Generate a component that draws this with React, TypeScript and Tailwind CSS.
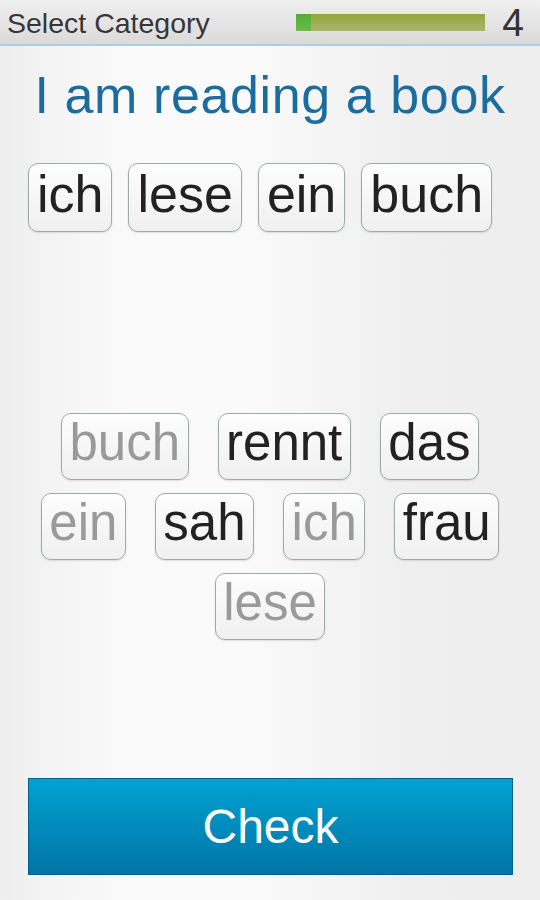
import React from "react";

const font = { fontFamily: '"Liberation Sans", Arial, sans-serif' };

function Tile({ w, used, small }: { w: string; used?: boolean; small?: boolean }) {
  return (
    <div
      className={`flex items-center justify-center rounded-[10px] border-[1.5px] border-[#9bada9] bg-gradient-to-b from-[#fdfdfd] to-[#f0f0f0] leading-none shadow-[0_1px_2px_rgba(0,0,0,0.12)] ${
        small ? "h-[67px] px-[7.5px] text-[51px]" : "h-[69px] px-[8px] text-[52px]"
      } ${used ? "text-[#9a9a9a]" : "text-[#222222]"}`}
    >
      <span className="relative -top-[4px]">{w}</span>
    </div>
  );
}

export default function App() {
  const top = ["ich", "lese", "ein", "buch"];
  const rows: { w: string; used?: boolean }[][] = [
    [{ w: "buch", used: true }, { w: "rennt" }, { w: "das" }],
    [{ w: "ein", used: true }, { w: "sah" }, { w: "ich", used: true }, { w: "frau" }],
    [{ w: "lese", used: true }],
  ];
  return (
    <div
      style={font}
      className="flex h-[900px] w-[540px] flex-col bg-[linear-gradient(to_right,#eeeeee_0%,#f4f4f4_10%,#fafafa_25%,#fafafa_45%,#f4f4f4_62%,#efefef_75%,#eeeeee_100%)]"
    >
      <div className="flex h-[46px] items-center border-b-2 border-[#a9d0e2] bg-gradient-to-b from-[#f0f0f0] to-[#dadada] pl-[7px] pr-[16px]">
        <span className="relative top-[1px] text-[28.5px] leading-none text-[#363636]">Select Category</span>
        <div className="ml-auto flex h-[17px] w-[189px] overflow-hidden bg-gradient-to-b from-[#93a73a] to-[#a9b56c]">
          <div className="h-full w-[15px] bg-gradient-to-b from-[#4fae34] to-[#6cbb4a]" />
        </div>
        <span className="ml-[17px] text-[39px] leading-none text-[#333333]">4</span>
      </div>

      <div className="mt-[23px] text-center text-[52px] leading-none tracking-[0.6px] text-[#1a6d9e]">
        I am reading a book
      </div>

      <div className="mt-[42px] flex gap-[16px] pl-[28px]">
        {top.map((w) => (
          <Tile key={w} w={w} />
        ))}
      </div>

      <div className="mt-[181px] flex flex-col gap-[13px]">
        {rows.map((row, i) => (
          <div key={i} className="flex justify-center gap-[29px]">
            {row.map((p, j) => (
              <Tile key={j} w={p.w} used={p.used} small />
            ))}
          </div>
        ))}
      </div>

      <div className="mt-auto mb-[25px] px-[28px]">
        <div className="flex h-[97px] w-[485px] items-center justify-center border border-[#00628c] bg-gradient-to-b from-[#01a2d3] to-[#0075a6] text-[48px] text-white">
          Check
        </div>
      </div>
    </div>
  );
}
